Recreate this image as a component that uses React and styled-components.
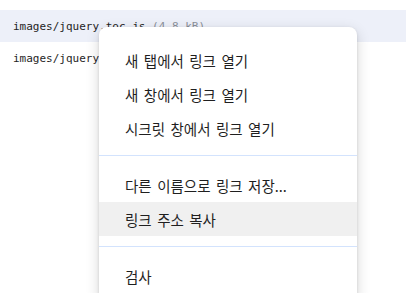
import React from "react";
import styled, { createGlobalStyle } from "styled-components";

const Global = createGlobalStyle`
  html, body { margin: 0; padding: 0; background: #ffffff; }
  body { width: 406px; height: 293px; overflow: hidden; }
`;

const Page = styled.div`
  position: relative;
  width: 406px;
  height: 293px;
  padding-top: 10px;
  box-sizing: border-box;
  overflow: hidden;
  background: #ffffff;
`;

const FileList = styled.div`
  display: flex;
  flex-direction: column;
`;

const FileRow = styled.div`
  display: flex;
  align-items: center;
  height: 32px;
  padding-left: 13px;
  background: ${(p) => (p.$active ? "#edf0f9" : "transparent")};
  font-family: "DejaVu Sans Mono", "Liberation Mono", monospace;
  font-size: 11px;
  color: #1f1f1f;
  white-space: pre;
`;

const FileSize = styled.span`
  color: #8a8f98;
`;

const Menu = styled.div`
  position: absolute;
  left: 99px;
  top: 27px;
  width: 258px;
  padding-top: 16px;
  padding-bottom: 8px;
  background: #ffffff;
  border-radius: 8px;
  box-shadow: 0 4px 14px rgba(0, 0, 0, 0.16), 0 1px 3px rgba(0, 0, 0, 0.12);
  display: flex;
  flex-direction: column;
`;

const Item = styled.div`
  display: flex;
  align-items: center;
  height: 34px;
  padding-left: 26px;
  background: ${(p) => (p.$hover ? "#f0f0f0" : "transparent")};
  font-family: "Noto Sans CJK KR", "Noto Sans", sans-serif;
  font-size: 14.5px;
  word-spacing: 2.2px;
  color: #1f1f1f;
  white-space: nowrap;
`;

const Separator = styled.div`
  height: 1px;
  margin: 10px 0 12px;
  background: #d3e3fd;
`;

export default function App() {
  return (
    <>
      <Global />
      <Page>
        <FileList>
          <FileRow $active>
            images/jquery.toc.js <FileSize>(4.8 kB)</FileSize>
          </FileRow>
          <FileRow>images/jquery.toc.min.js</FileRow>
        </FileList>
        <Menu>
          <Item>새 탭에서 링크 열기</Item>
          <Item>새 창에서 링크 열기</Item>
          <Item>시크릿 창에서 링크 열기</Item>
          <Separator />
          <Item>다른 이름으로 링크 저장...</Item>
          <Item $hover>링크 주소 복사</Item>
          <Separator />
          <Item>검사</Item>
        </Menu>
      </Page>
    </>
  );
}
